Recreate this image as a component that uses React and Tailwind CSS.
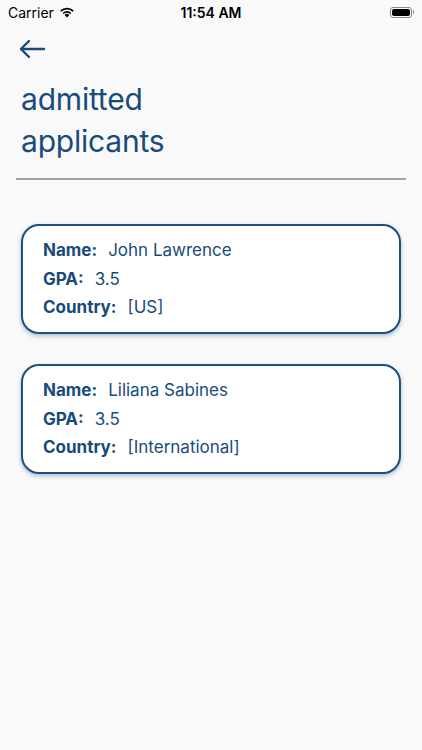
import React from 'react';

const applicants = [
  { name: 'John Lawrence', gpa: '3.5', country: '[US]' },
  { name: 'Liliana Sabines', gpa: '3.5', country: '[International]' },
];

const StatusBar = () => (
  <div className="relative h-[24px] flex items-center px-[8px] text-[14px] text-black" style={{ fontFamily: 'Inter, "Liberation Sans", sans-serif' }}>
    <div className="flex items-center gap-[5px]">
      <span>Carrier</span>
      <svg width="16" height="12" viewBox="0 0 16 12">
        <path d="M8 11.5 L5.6 8.9 A3.4 3.4 0 0 1 10.4 8.9 Z" fill="#000" />
        <path d="M3.6 6.9 A6.3 6.3 0 0 1 12.4 6.9 L11.2 8.1 A4.6 4.6 0 0 0 4.8 8.1 Z" fill="#000" />
        <path d="M1.2 4.5 A9.7 9.7 0 0 1 14.8 4.5 L13.6 5.7 A8 8 0 0 0 2.4 5.7 Z" fill="#000" />
      </svg>
    </div>
    <div className="absolute left-0 right-0 text-center font-semibold pointer-events-none">11:54 AM</div>
    <div className="ml-auto flex items-center">
      <div className="w-[22px] h-[11px] rounded-[3px] border border-[#888] p-[1px]">
        <div className="w-full h-full rounded-[2px] bg-black" />
      </div>
      <div className="w-[1.5px] h-[4px] bg-[#888] rounded-r-sm ml-[1px]" />
    </div>
  </div>
);

const Row = ({ label, value }) => (
  <div className="flex items-baseline h-[28.5px]">
    <span className="font-bold">{label}:</span>
    <span className="ml-[11px] font-normal">{value}</span>
  </div>
);

export default function App() {
  return (
    <div className="w-[422px] h-[750px] bg-[#f9f9f9] text-[#184b7a] overflow-hidden" style={{ fontFamily: 'Inter, "Open Sans", sans-serif' }}>
      <StatusBar />
      <div className="pl-[18px] pt-[14px]">
        <svg width="28" height="22" viewBox="0 0 28 22" fill="none" stroke="#184b7a" strokeWidth="2.4" strokeLinecap="round" strokeLinejoin="round">
          <path d="M26 11 H3" />
          <path d="M11 3 L3 11 L11 19" />
        </svg>
      </div>
      <h1 className="pl-[21px] mt-[18px] text-[30px] leading-[42px] font-normal tracking-[-0.2px]">
        admitted
        <br />
        applicants
      </h1>
      <div className="mx-[16px] mt-[16px] h-[2px] bg-[#a4a4a4]" />
      <div className="mt-[44px] px-[21px] flex flex-col gap-[30px]">
        {applicants.map((a) => (
          <div key={a.name} className="h-[110px] bg-white border-2 border-[#1e4f7e] rounded-[18px] shadow-[0_2px_4px_rgba(30,79,126,0.35)] pl-[20px] pt-[12px] text-[17px]">
            <Row label="Name" value={a.name} />
            <Row label="GPA" value={a.gpa} />
            <Row label="Country" value={a.country} />
          </div>
        ))}
      </div>
    </div>
  );
}
